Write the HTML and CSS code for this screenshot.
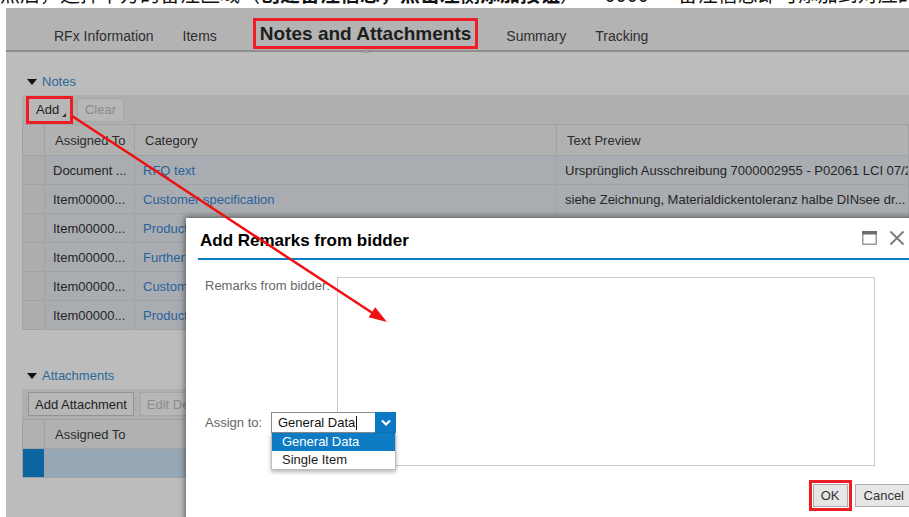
FILE: index.html
```html
<!DOCTYPE html>
<html lang="zh">
<head>
<meta charset="utf-8">
<title>Notes and Attachments</title>
<link rel="stylesheet" href="styles.css">
</head>
<body>
<p class="caption"><span>然后，选择下方的备注区域（<b>创建备注信息，点击左侧添加按钮</b>）→ 0000 → 备注信息即可添加到对应的行项目</span></p>

<div class="app">
  <nav class="tabs">
    <a class="tab">RFx Information</a>
    <a class="tab">Items</a>
    <a class="tab tab-active marked">Notes and Attachments</a>
    <a class="tab">Summary</a>
    <a class="tab">Tracking</a>
  </nav>

  <main class="content">
    <section class="panel">
      <h3 class="panel-title"><span class="caret"></span>Notes</h3>
      <div class="toolbar">
        <button class="btn btn-menu marked">Add</button>
        <button class="btn" disabled>Clear</button>
      </div>
      <table class="grid">
        <colgroup><col class="c-sel"><col class="c-assign"><col class="c-cat"><col></colgroup>
        <thead>
          <tr><th></th><th>Assigned To</th><th>Category</th><th>Text Preview</th></tr>
        </thead>
        <tbody>
          <tr><td class="sel"></td><td>Document ...</td><td class="link">RFQ text</td><td>Ursprünglich Ausschreibung 7000002955 - P02061 LCI 07/2016</td></tr>
          <tr><td class="sel"></td><td>Item00000...</td><td class="link">Customer specification</td><td>siehe Zeichnung, Materialdickentoleranz halbe DINsee dr...</td></tr>
          <tr><td class="sel"></td><td>Item00000...</td><td class="link">Product specification</td><td>Werkstoff nach Zeichnung</td></tr>
          <tr><td class="sel"></td><td>Item00000...</td><td class="link">Further information</td><td>Verpackung nach Absprache</td></tr>
          <tr><td class="sel"></td><td>Item00000...</td><td class="link">Customer specification</td><td>siehe Zeichnung</td></tr>
          <tr><td class="sel"></td><td>Item00000...</td><td class="link">Product specification</td><td>Werkstoff nach Zeichnung</td></tr>
        </tbody>
      </table>
    </section>

    <section class="panel panel-attach">
      <h3 class="panel-title"><span class="caret"></span>Attachments</h3>
      <div class="toolbar">
        <button class="btn btn-wide">Add Attachment</button>
        <button class="btn btn-wide" disabled>Edit Description</button>
      </div>
      <table class="grid grid-attach">
        <colgroup><col class="c-sel"><col class="c-wide"><col class="c-wide"><col></colgroup>
        <thead>
          <tr><th></th><th>Assigned To</th><th>Title</th><th>File Name</th></tr>
        </thead>
        <tbody>
          <tr class="row-selected"><td class="sel"></td><td></td><td></td><td></td></tr>
        </tbody>
      </table>
    </section>
  </main>

  <div class="dialog" role="dialog" aria-label="Add Remarks from bidder">
    <header class="dialog-head">
      <h2 class="dialog-title">Add Remarks from bidder</h2>
      <div class="dialog-tools">
        <svg class="ico" width="15" height="14" viewBox="0 0 15 14" aria-hidden="true">
          <rect x="0.75" y="0.75" width="13.5" height="12.5" fill="none" stroke="#9a9a9a" stroke-width="1.5"/>
          <rect x="0" y="0" width="15" height="3.5" fill="#6e6e6e"/>
        </svg>
        <svg class="ico" width="16" height="16" viewBox="0 0 16 16" aria-hidden="true">
          <path d="M1.5 1.5 L14.5 14.5 M14.5 1.5 L1.5 14.5" stroke="#7a7a7a" stroke-width="1.8" fill="none"/>
        </svg>
      </div>
    </header>

    <div class="dialog-body">
      <div class="form">
        <label class="lbl lbl-remarks">Remarks from bidder:</label>
        <textarea class="remarks"></textarea>
        <label class="lbl lbl-assign">Assign to:</label>
        <div class="combo">
          <span class="combo-input">General Data<span class="cursor"></span></span>
          <span class="combo-btn">
            <svg width="12" height="8" viewBox="0 0 12 8" aria-hidden="true"><path d="M2 1.5 L6 5.5 L10 1.5" stroke="#fff" stroke-width="2.2" fill="none"/></svg>
          </span>
        </div>
        <ul class="listbox">
          <li class="opt opt-selected">General Data</li>
          <li class="opt">Single Item</li>
        </ul>
      </div>
    </div>

    <footer class="dialog-foot">
      <button class="btn-dlg marked marked-ok">OK</button>
      <button class="btn-dlg">Cancel</button>
    </footer>
  </div>
</div>

<svg class="pointer" width="909" height="517" viewBox="0 0 909 517" aria-hidden="true">
  <line x1="72" y1="116" x2="374" y2="314" stroke="#f01010" stroke-width="2.5"/>
  <polygon points="387,322 375.2,307.2 368.6,317.2" fill="#f01010"/>
</svg>
</body>
</html>
```

FILE: styles.css
```css
* { box-sizing: border-box; }

html, body { margin: 0; }

body {
  width: 909px;
  height: 517px;
  overflow: hidden;
  position: relative;
  background: #fff;
  font-family: "Liberation Sans", Arial, sans-serif;
}

/* line of text running above the screenshot, mostly cut off */
.caption {
  margin: 0;
  height: 8px;
  overflow: hidden;
  font-family: "Noto Sans CJK SC", sans-serif;
  font-size: 20px;
  line-height: 20px;
  color: #111;
  white-space: nowrap;
}
.caption span { display: block; margin-top: -16px; }

/* application frame, dimmed behind the modal */
.app {
  margin-left: 6px;
  height: 509px;
  position: relative;
  overflow: hidden;
  background: #bcbcbc;
}

/* tab strip */
.tabs {
  display: flex;
  align-items: flex-end;
  gap: 29px;
  height: 44px;
  padding: 0 0 4px 48px;
  background: #b3b3b3;
  border-bottom: 2px solid #8e8e8e;
}
.tab {
  font-size: 14px;
  line-height: 16px;
  padding-bottom: 2px;
  color: #2e2e2e;
  white-space: nowrap;
}
.tab-active {
  position: relative;
  font-size: 19px;
  font-weight: bold;
  line-height: 25px;
  padding: 0 4px;
  margin: 0 2px 0 10px;
  color: #1e1e1e;
}
.tab-active::after {
  content: "";
  position: absolute;
  left: 50%;
  bottom: -7px;
  margin-left: -4px;
  border-left: 4px solid transparent;
  border-right: 4px solid transparent;
  border-bottom: 4px solid #9c9c9c;
}

/* red annotation frame */
.marked { outline: 3px solid #ee1c24; }

/* page content */
.content { padding-left: 16px; }

.panel-title {
  display: flex;
  align-items: center;
  margin: 22px 0 5px 5px;
  font-size: 13px;
  line-height: 16px;
  font-weight: normal;
  color: #2b6898;
}
.panel-attach .panel-title { margin-top: 38px; margin-bottom: 5px; }

.caret {
  width: 0;
  height: 0;
  margin-right: 5px;
  border-left: 5px solid transparent;
  border-right: 5px solid transparent;
  border-top: 6px solid #111;
}

.toolbar {
  display: flex;
  align-items: center;
  gap: 6px;
  height: 29px;
  padding-left: 6px;
  background: #afafaf;
}
.panel-attach .toolbar { height: 30px; }

.btn {
  position: relative;
  height: 24px;
  padding: 0 6px;
  font-family: inherit;
  font-size: 13px;
  color: #222;
  background: #b7b7b7;
  border: 1px solid #939393;
  white-space: nowrap;
}
.btn:disabled { color: #8b8b8b; border-color: #a6a6a6; }
.btn-menu {
  width: 43px;
  padding: 0 0 0 7px;
  text-align: left;
  outline-offset: -1px;
}
.btn-menu::after {
  content: "";
  position: absolute;
  right: 4px;
  bottom: 4px;
  border-left: 4px solid transparent;
  border-bottom: 4px solid #333;
}
.toolbar .btn:disabled:not(.btn-wide) { width: 47px; }

/* tables */
.grid {
  width: 100%;
  border-collapse: collapse;
  table-layout: fixed;
  font-size: 13px;
  color: #252525;
}
.c-sel { width: 22px; }
.c-assign { width: 90px; }
.c-cat { width: 422px; }
.c-wide { width: 200px; }

.grid th,
.grid td {
  border: 1px solid #a0a3a6;
  padding: 0 8px;
  text-align: left;
  font-weight: normal;
  white-space: nowrap;
  overflow: hidden;
}
.grid th {
  height: 31px;
  padding-left: 10px;
  background: #b1b1b1;
  color: #2b2b2b;
}
.grid td { height: 29px; background: #a9adb1; }
.grid td.sel { padding: 0; background: #adadad; }
.grid td.link { color: #29629a; }

.grid-attach th { height: 29px; }
.row-selected td { background: #97a8b5; }
.row-selected td.sel { background: #0c65a0; }

/* modal dialog */
.dialog {
  position: absolute;
  left: 180px;
  top: 210px;
  z-index: 2;
  width: 740px;
  height: 320px;
  background: #fff;
  box-shadow: 0 0 6px 1px rgba(0, 0, 0, 0.5);
}

.dialog-head {
  display: flex;
  align-items: center;
  justify-content: space-between;
  height: 42px;
  margin: 0 12px;
  padding: 6px 9px 0 2px;
  border-bottom: 2px solid #0b7cc4;
}
.dialog-title {
  margin: 0;
  font-size: 17px;
  line-height: 34px;
  font-weight: bold;
  color: #000;
}
.dialog-tools { display: flex; align-items: center; gap: 12px; padding-bottom: 6px; }
.ico { display: block; }

.dialog-body { padding: 17px 0 0 19px; }

.form {
  display: grid;
  grid-template-columns: 66px 66px 538px;
  grid-template-rows: 135px 21px 33px;
}
.lbl { font-size: 13px; color: #666; line-height: 16px; }
.lbl-remarks {
  grid-column: 1 / 3;
  grid-row: 1;
  align-self: start;
  padding-top: 1px;
}
.lbl-assign {
  grid-column: 1;
  grid-row: 2;
  align-self: center;
}
.remarks {
  grid-column: 3;
  grid-row: 1 / 4;
  width: 100%;
  height: 100%;
  margin: 0;
  resize: none;
  border: 1px solid #c9c9c9;
  background: #fff;
}

.combo {
  grid-column: 2 / 4;
  grid-row: 2;
  z-index: 1;
  display: flex;
  width: 125px;
  height: 21px;
}
.combo-input {
  display: flex;
  align-items: center;
  width: 104px;
  padding-left: 6px;
  font-size: 13px;
  color: #111;
  background: #fff;
  border: 1px solid #8a8a8a;
  border-right: 0;
}
.cursor {
  display: inline-block;
  width: 1px;
  height: 14px;
  margin-left: 1px;
  background: #111;
}
.combo-btn {
  display: flex;
  align-items: center;
  justify-content: center;
  width: 21px;
  background: #0b79c1;
}

.listbox {
  grid-column: 2 / 4;
  grid-row: 3;
  z-index: 1;
  align-self: start;
  width: 125px;
  margin: 0;
  padding: 0;
  list-style: none;
  background: #fff;
  border: 1px solid #bdbdbd;
  border-top: 0;
  box-shadow: 0 2px 4px rgba(0, 0, 0, 0.3);
}
.opt {
  height: 18px;
  padding-left: 10px;
  font-size: 13px;
  line-height: 18px;
  color: #222;
}
.opt-selected { background: #0e7cc4; color: #fff; }

.dialog-foot {
  display: flex;
  justify-content: flex-end;
  gap: 7px;
  margin-top: 18px;
  padding-right: 13px;
}
.btn-dlg {
  height: 23px;
  padding: 0 7px;
  font-family: inherit;
  font-size: 13px;
  color: #333;
  background: #e6e6e6;
  border: 1px solid #adadad;
}
.btn-dlg:last-child { padding: 0 8px; }
.marked-ok { outline-offset: 1px; }

/* annotation arrow drawn over the whole capture */
.pointer {
  position: absolute;
  left: 0;
  top: 0;
  z-index: 10;
  pointer-events: none;
}
```
